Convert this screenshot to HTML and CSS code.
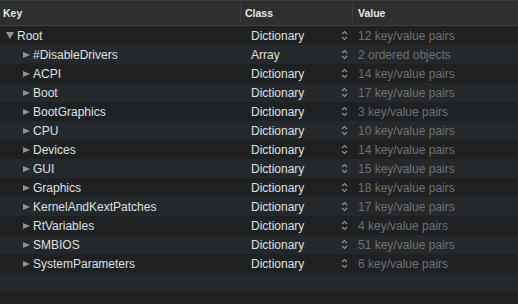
FILE: index.html
```html
<!DOCTYPE html>
<html>
<head>
<meta charset="utf-8">
<link rel="stylesheet" href="styles.css">
</head>
<body>
<div class="table">
  <div class="header">
    <div class="hcell hkey">Key</div>
    <div class="hcell hclass">Class</div>
    <div class="hcell hvalue">Value</div>
  </div>
  <div class="rows">
    <div class="row">
      <div class="key root"><span class="tri down"></span>Root</div>
      <div class="cls">Dictionary<span class="stepper"><svg width="7" height="11" viewBox="0 0 7 11"><path d="M1 4 L3.5 1.5 L6 4 M1 7 L3.5 9.5 L6 7" fill="none" stroke="#8d8f91" stroke-width="1.2"/></svg></span></div>
      <div class="val">12 key/value pairs</div>
    </div>
    <div class="row">
      <div class="key child"><span class="tri right"></span>#DisableDrivers</div>
      <div class="cls">Array<span class="stepper"><svg width="7" height="11" viewBox="0 0 7 11"><path d="M1 4 L3.5 1.5 L6 4 M1 7 L3.5 9.5 L6 7" fill="none" stroke="#8d8f91" stroke-width="1.2"/></svg></span></div>
      <div class="val">2 ordered objects</div>
    </div>
    <div class="row">
      <div class="key child"><span class="tri right"></span>ACPI</div>
      <div class="cls">Dictionary<span class="stepper"><svg width="7" height="11" viewBox="0 0 7 11"><path d="M1 4 L3.5 1.5 L6 4 M1 7 L3.5 9.5 L6 7" fill="none" stroke="#8d8f91" stroke-width="1.2"/></svg></span></div>
      <div class="val">14 key/value pairs</div>
    </div>
    <div class="row">
      <div class="key child"><span class="tri right"></span>Boot</div>
      <div class="cls">Dictionary<span class="stepper"><svg width="7" height="11" viewBox="0 0 7 11"><path d="M1 4 L3.5 1.5 L6 4 M1 7 L3.5 9.5 L6 7" fill="none" stroke="#8d8f91" stroke-width="1.2"/></svg></span></div>
      <div class="val">17 key/value pairs</div>
    </div>
    <div class="row">
      <div class="key child"><span class="tri right"></span>BootGraphics</div>
      <div class="cls">Dictionary<span class="stepper"><svg width="7" height="11" viewBox="0 0 7 11"><path d="M1 4 L3.5 1.5 L6 4 M1 7 L3.5 9.5 L6 7" fill="none" stroke="#8d8f91" stroke-width="1.2"/></svg></span></div>
      <div class="val">3 key/value pairs</div>
    </div>
    <div class="row">
      <div class="key child"><span class="tri right"></span>CPU</div>
      <div class="cls">Dictionary<span class="stepper"><svg width="7" height="11" viewBox="0 0 7 11"><path d="M1 4 L3.5 1.5 L6 4 M1 7 L3.5 9.5 L6 7" fill="none" stroke="#8d8f91" stroke-width="1.2"/></svg></span></div>
      <div class="val">10 key/value pairs</div>
    </div>
    <div class="row">
      <div class="key child"><span class="tri right"></span>Devices</div>
      <div class="cls">Dictionary<span class="stepper"><svg width="7" height="11" viewBox="0 0 7 11"><path d="M1 4 L3.5 1.5 L6 4 M1 7 L3.5 9.5 L6 7" fill="none" stroke="#8d8f91" stroke-width="1.2"/></svg></span></div>
      <div class="val">14 key/value pairs</div>
    </div>
    <div class="row">
      <div class="key child"><span class="tri right"></span>GUI</div>
      <div class="cls">Dictionary<span class="stepper"><svg width="7" height="11" viewBox="0 0 7 11"><path d="M1 4 L3.5 1.5 L6 4 M1 7 L3.5 9.5 L6 7" fill="none" stroke="#8d8f91" stroke-width="1.2"/></svg></span></div>
      <div class="val">15 key/value pairs</div>
    </div>
    <div class="row">
      <div class="key child"><span class="tri right"></span>Graphics</div>
      <div class="cls">Dictionary<span class="stepper"><svg width="7" height="11" viewBox="0 0 7 11"><path d="M1 4 L3.5 1.5 L6 4 M1 7 L3.5 9.5 L6 7" fill="none" stroke="#8d8f91" stroke-width="1.2"/></svg></span></div>
      <div class="val">18 key/value pairs</div>
    </div>
    <div class="row">
      <div class="key child"><span class="tri right"></span>KernelAndKextPatches</div>
      <div class="cls">Dictionary<span class="stepper"><svg width="7" height="11" viewBox="0 0 7 11"><path d="M1 4 L3.5 1.5 L6 4 M1 7 L3.5 9.5 L6 7" fill="none" stroke="#8d8f91" stroke-width="1.2"/></svg></span></div>
      <div class="val">17 key/value pairs</div>
    </div>
    <div class="row">
      <div class="key child"><span class="tri right"></span>RtVariables</div>
      <div class="cls">Dictionary<span class="stepper"><svg width="7" height="11" viewBox="0 0 7 11"><path d="M1 4 L3.5 1.5 L6 4 M1 7 L3.5 9.5 L6 7" fill="none" stroke="#8d8f91" stroke-width="1.2"/></svg></span></div>
      <div class="val">4 key/value pairs</div>
    </div>
    <div class="row">
      <div class="key child"><span class="tri right"></span>SMBIOS</div>
      <div class="cls">Dictionary<span class="stepper"><svg width="7" height="11" viewBox="0 0 7 11"><path d="M1 4 L3.5 1.5 L6 4 M1 7 L3.5 9.5 L6 7" fill="none" stroke="#8d8f91" stroke-width="1.2"/></svg></span></div>
      <div class="val">51 key/value pairs</div>
    </div>
    <div class="row">
      <div class="key child"><span class="tri right"></span>SystemParameters</div>
      <div class="cls">Dictionary<span class="stepper"><svg width="7" height="11" viewBox="0 0 7 11"><path d="M1 4 L3.5 1.5 L6 4 M1 7 L3.5 9.5 L6 7" fill="none" stroke="#8d8f91" stroke-width="1.2"/></svg></span></div>
      <div class="val">6 key/value pairs</div>
    </div>
    <div class="row empty"></div>
    <div class="row empty"></div>
  </div>
</div>
</body>
</html>
```
FILE: styles.css
```css
* { box-sizing: border-box; }
html, body {
  margin: 0;
  padding: 0;
  background: #1e2021;
  width: 518px;
  height: 304px;
  overflow: hidden;
}
body {
  font-family: "Liberation Sans", Arial, sans-serif;
  font-size: 12px;
  color: #dfe0e1;
}
.header {
  display: grid;
  grid-template-columns: 240px 112px 1fr;
  height: 26px;
  background: #2c2e2f;
  border-top: 1px solid #3a3c3d;
  border-bottom: 1px solid #3f4142;
}
.hcell {
  display: flex;
  align-items: center;
  font-weight: bold;
  font-size: 10.5px;
  color: #e6e7e8;
  padding-bottom: 1px;
}
.hkey { padding-left: 3px; }
.hclass, .hvalue {
  border-left: 1px solid #3d3f41;
  margin: 3px 0 3px;
}
.hclass { padding-left: 4px; }
.hvalue { padding-left: 5px; }
.rows { display: flex; flex-direction: column; }
.row {
  display: grid;
  grid-template-columns: 240px 112px 1fr;
  height: 19px;
  align-items: center;
  background: #1e2021;
}
.row:nth-child(even) { background: #25282a; }
.key {
  display: flex;
  align-items: center;
  white-space: nowrap;
}
.root { padding-left: 6px; }
.child { padding-left: 22px; }
.tri {
  display: inline-block;
  width: 0;
  height: 0;
  margin-right: 4px;
}
.tri.right {
  border-top: 3.5px solid transparent;
  border-bottom: 3.5px solid transparent;
  border-left: 7px solid #8f9193;
  margin-left: 1px;
  margin-right: 3px;
}
.tri.down {
  border-left: 4px solid transparent;
  border-right: 4px solid transparent;
  border-top: 7px solid #8f9193;
  margin-right: 3px;
}
.cls {
  display: flex;
  align-items: center;
  justify-content: space-between;
  padding-left: 11px;
  padding-right: 4px;
}
.stepper { display: flex; align-items: center; }
.val {
  padding-left: 6px;
  color: #6e7173;
  white-space: nowrap;
}
```
